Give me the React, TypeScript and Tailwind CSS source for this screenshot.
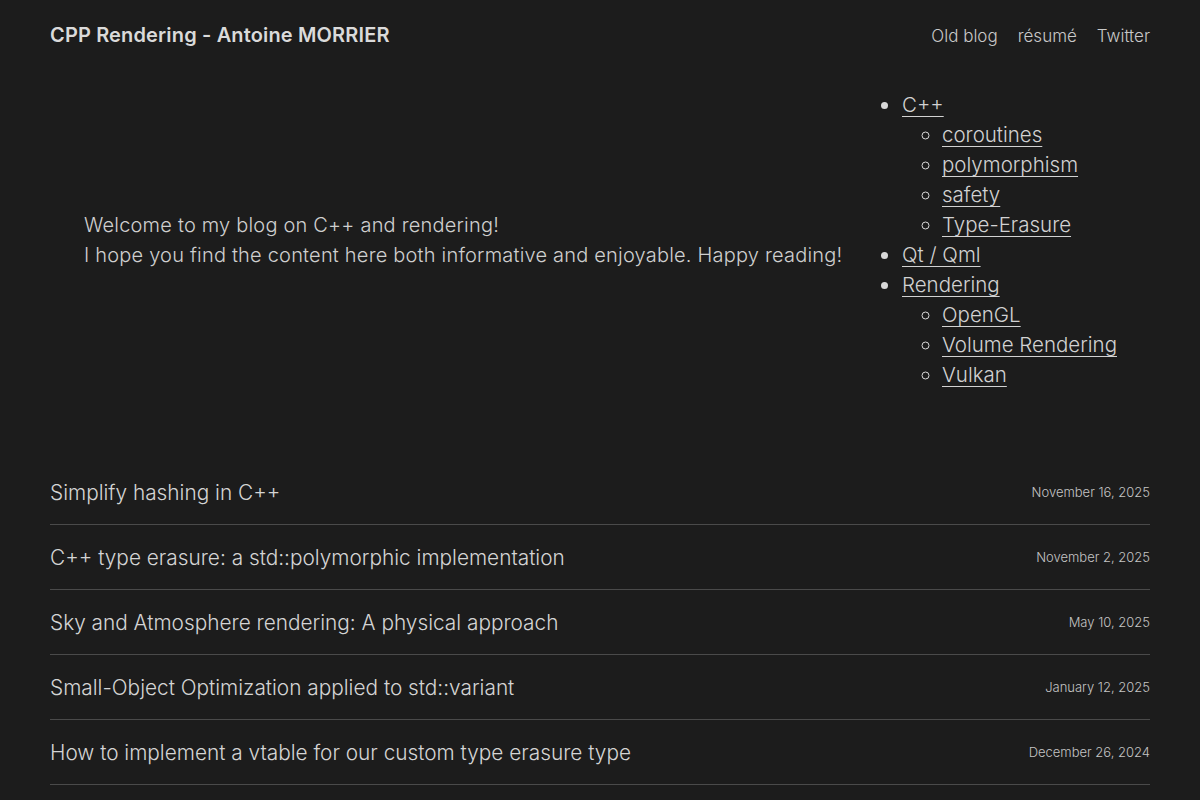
const topics = [
  { name: "C++", children: ["coroutines", "polymorphism", "safety", "Type-Erasure"] },
  { name: "Qt / Qml", children: [] },
  { name: "Rendering", children: ["OpenGL", "Volume Rendering", "Vulkan"] },
];

const posts = [
  { title: "Simplify hashing in C++", date: "November 16, 2025" },
  { title: "C++ type erasure: a std::polymorphic implementation", date: "November 2, 2025" },
  { title: "Sky and Atmosphere rendering: A physical approach", date: "May 10, 2025" },
  { title: "Small-Object Optimization applied to std::variant", date: "January 12, 2025" },
  { title: "How to implement a vtable for our custom type erasure type", date: "December 26, 2024" },
];

export default function App() {
  return (
    <div
      className="min-h-screen bg-[#1c1c1c] text-[#d2d2d2] font-light"
      style={{ fontFamily: "Inter, 'Noto Sans', sans-serif" }}
    >
      <div className="mx-[50px]">
        <header className="h-[70px] flex items-center justify-between">
          <h1 className="text-[20px] font-semibold text-[#dadada] tracking-[0.15px]">
            CPP Rendering - Antoine MORRIER
          </h1>
          <nav className="flex gap-[20px] text-[17px] text-[#c8c8c8] mt-[3px]">
            <a>Old blog</a>
            <a>résumé</a>
            <a>Twitter</a>
          </nav>
        </header>

        <section className="flex items-center justify-between mt-[20px]">
          <p className="pl-[34px] text-[20px] leading-[30px] text-[#cfcfcf] tracking-[0.2px]">
            Welcome to my blog on C++ and rendering!
            <br />
            I hope you find the content here both informative and enjoyable. Happy reading!
          </p>
          <ul className="list-disc pl-[29px] w-[278px] text-[20.5px] leading-[30px] marker:text-[#d8d8d8]">
            {topics.map((t) => (
              <li key={t.name} className="pl-[1px]">
                <a className="underline underline-offset-[4px] decoration-1">{t.name}</a>
                {t.children.length > 0 && (
                  <ul className="list-[circle] pl-[40px]">
                    {t.children.map((c) => (
                      <li key={c}>
                        <a className="underline underline-offset-[4px] decoration-1">{c}</a>
                      </li>
                    ))}
                  </ul>
                )}
              </li>
            ))}
          </ul>
        </section>

        <div className="mt-[70px]">
          {posts.map((p) => (
            <div
              key={p.title}
              className="h-[65px] flex items-center justify-between border-b border-[#4a4a4a] pt-[2px]"
            >
              <span className="text-[20.8px] text-[#d4d4d4]">{p.title}</span>
              <span className="text-[13px] text-[#c4c4c4]">{p.date}</span>
            </div>
          ))}
        </div>
      </div>
    </div>
  );
}
